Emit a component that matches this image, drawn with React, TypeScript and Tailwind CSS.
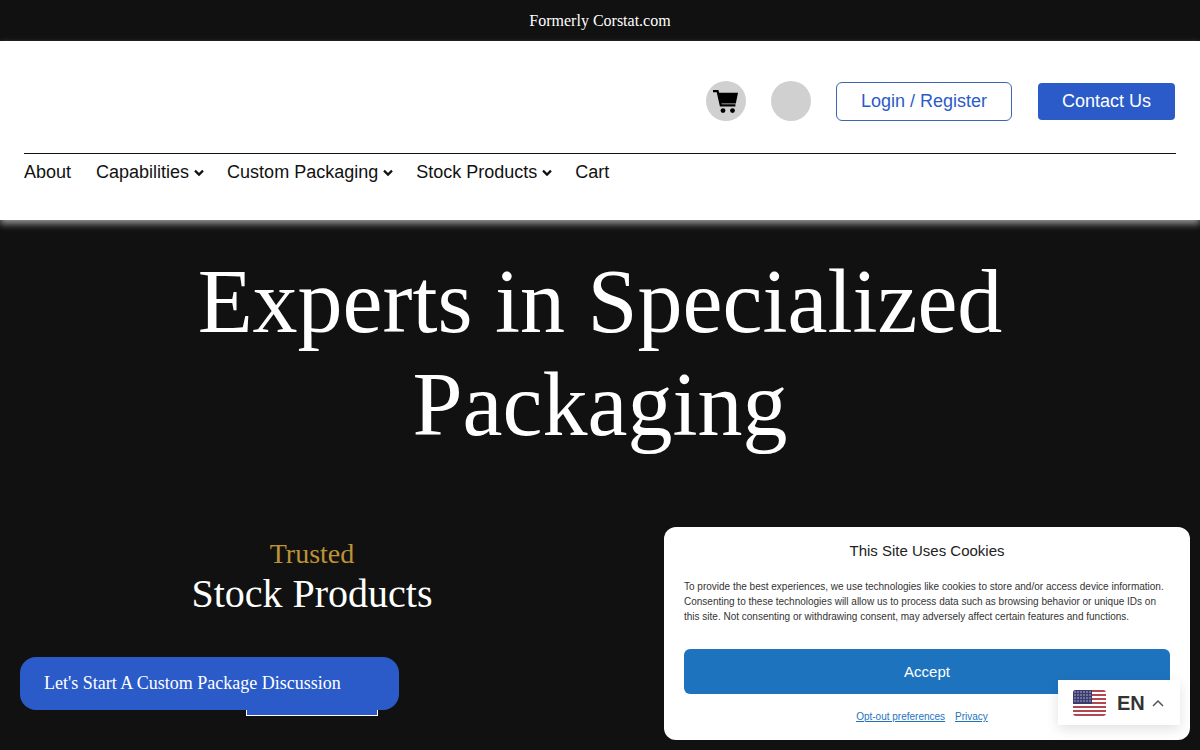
const sans = "font-['Liberation_Sans',Arial,sans-serif]";
const serif = "font-['Liberation_Serif','Times_New_Roman',serif]";

function NavItem({ label, caret }: { label: string; caret?: boolean }) {
  return (
    <div className="flex items-center">
      <span>{label}</span>
      {caret && (
        <svg width="10" height="8" viewBox="0 0 10 8" fill="none" stroke="#111" strokeWidth="2.2" className="ml-[5px] mr-[-2px] mt-[1px]">
          <path d="M1 1.6l4 4 4-4" />
        </svg>
      )}
    </div>
  );
}

function Cart() {
  return (
    <svg width="25" height="24" viewBox="0 0 25 24" fill="none" className="mt-[1px] mr-[1px]">
      <path d="M0 1.2h4.6l3.2 14.2h14.6" stroke="#000" strokeWidth="2.2" />
      <path d="M5.4 2.8H25l-2.2 10.6H7.6z" fill="#000" />
      <circle cx="10" cy="20.6" r="2.4" fill="#000" />
      <circle cx="19.5" cy="20.6" r="2.4" fill="#000" />
    </svg>
  );
}

function Flag() {
  const stripes = [0, 2, 4, 6, 8, 10, 12];
  return (
    <svg width="33" height="26" viewBox="0 0 33 26" className="rounded-[3px]">
      <rect width="33" height="26" fill="#fff" />
      {stripes.map((i) => (
        <rect key={i} y={i * 2} width="33" height="2" fill="#b3474f" />
      ))}
      <rect width="19" height="14" fill="#3c3b6e" />
      {[2, 5, 8, 11].map((y) =>
        [2, 5, 8, 11, 14, 17].map((x) => <circle key={`${x}-${y}`} cx={x} cy={y} r="0.7" fill="#cfd3e6" />)
      )}
    </svg>
  );
}

export default function App() {
  return (
    <div className={`relative w-[1200px] h-[750px] overflow-hidden bg-[#111111] ${serif}`}>
      <div className="h-[41px] flex items-center justify-center text-white text-base">Formerly Corstat.com</div>

      <header className={`relative z-10 h-[179px] bg-white px-6 shadow-[0_4px_7px_rgba(255,255,255,0.55)] ${sans}`}>
        <div className="h-[113px] flex items-start justify-end border-b border-[#111] pr-[1px] pt-[40px]">
          <div className="flex items-center">
            <div className="w-10 h-10 rounded-full bg-[#d0d0d0] flex items-center justify-center">
              <Cart />
            </div>
            <div className="w-10 h-10 rounded-full bg-[#d0d0d0] ml-[25px]" />
            <div className="ml-[25px] w-[176px] h-[39px] rounded-[6px] border border-[#3a66b4] text-[#2a5bc8] text-lg flex items-center justify-center">
              Login / Register
            </div>
            <div className="ml-[26px] w-[137px] h-[37px] rounded-[4px] bg-[#2a5bc8] text-white text-lg flex items-center justify-center">
              Contact Us
            </div>
          </div>
        </div>
        <nav className="flex items-center gap-[25px] pt-[7px] text-lg leading-[22px] text-[#111]">
          <NavItem label="About" />
          <NavItem label="Capabilities" caret />
          <NavItem label="Custom Packaging" caret />
          <NavItem label="Stock Products" caret />
          <NavItem label="Cart" />
        </nav>
      </header>

      <main className="text-white">
        <h1 className="pt-[30px] text-center text-[90px] leading-[103px] font-normal">
          Experts in Specialized
          <br />
          Packaging
        </h1>
        <div className="mt-[81px] w-[624px] flex flex-col items-center">
          <div className="text-[28px] leading-[34px] text-[#bd9236]">Trusted</div>
          <div className="text-[40px] leading-[46px] text-white">Stock Products</div>
          <div className="mt-[40px] w-[132px] h-[59px] bg-[#2a5bc8] border border-white" />
        </div>
      </main>

      <div className="absolute left-5 top-[657px] w-[379px] h-[53px] rounded-[16px] bg-[#2a5bc8] text-white text-lg flex items-center pl-6 pb-[1px]">
        Let's Start A Custom Package Discussion
      </div>

      <div className={`absolute left-[664px] top-[527px] w-[526px] h-[213px] rounded-[12px] bg-white px-5 ${sans}`}>
        <div className="pt-[14px] text-center text-[15px] leading-[20px] text-[#222]">This Site Uses Cookies</div>
        <p className="mt-[18px] text-[10px] leading-[15px] text-[#333]">
          To provide the best experiences, we use technologies like cookies to store and/or access device information.
          Consenting to these technologies will allow us to process data such as browsing behavior or unique IDs on
          this site. Not consenting or withdrawing consent, may adversely affect certain features and functions.
        </p>
        <div className="mt-[25px] h-[45px] pt-[1px] rounded-[6px] bg-[#1e73be] text-white text-[15px] flex items-center justify-center">
          Accept
        </div>
        <div className="mt-4 pr-[10px] flex justify-center gap-[10px] text-[10px] leading-[14px] text-[#1e73be] underline">
          <span>Opt-out preferences</span>
          <span>Privacy</span>
        </div>
      </div>

      <div className={`absolute left-[1058px] top-[680px] w-[122px] h-[45px] bg-white flex items-center pl-[15px] shadow-[0_4px_12px_rgba(0,0,0,0.12)] ${sans}`}>
        <Flag />
        <span className="ml-[11px] text-xl font-bold text-[#333]">EN</span>
        <svg width="12" height="8" viewBox="0 0 12 8" className="ml-[7px]" fill="none" stroke="#555" strokeWidth="1.5">
          <path d="M1 7l5-5 5 5" />
        </svg>
      </div>
    </div>
  );
}
